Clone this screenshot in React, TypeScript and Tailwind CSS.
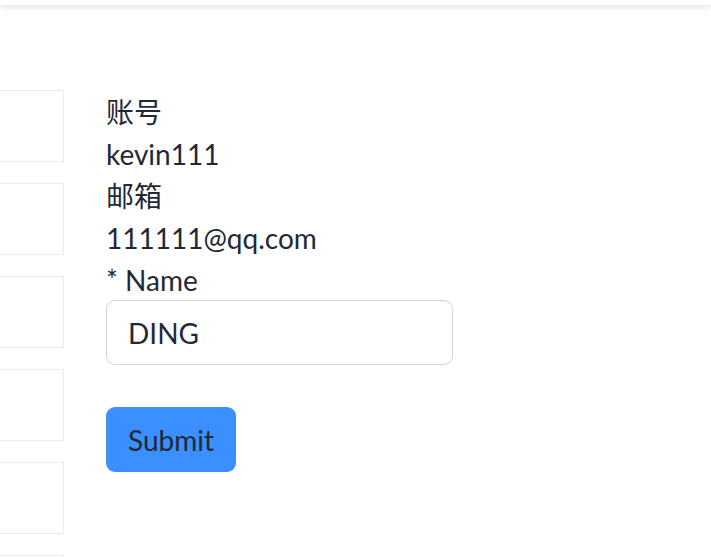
import React from "react";

export default function App() {
  const boxes = [0, 1, 2, 3, 4, 5];
  return (
    <div
      className="h-[557px] bg-white overflow-hidden text-[#1f2937]"
      style={{ fontFamily: 'Lato, "Noto Sans CJK SC", sans-serif' }}
    >
      <div className="h-[6px] bg-white shadow-[0_1px_6px_rgba(0,0,0,0.12)] border-b border-[#ececec]" />
      <div className="flex pt-[84px]">
        <div className="ml-[-136px] w-[200px] shrink-0 flex flex-col gap-[21px]">
          {boxes.map((b) => (
            <div key={b} className="h-[72px] shrink-0 border border-[#ebebeb] bg-white" />
          ))}
        </div>
        <div className="ml-[42px] pt-[1px] flex flex-col">
          <div className="text-[28px] leading-[42px]">账号</div>
          <div className="text-[28px] leading-[42px]">kevin111</div>
          <div className="text-[28px] leading-[42px]">邮箱</div>
          <div className="text-[28px] leading-[42px]">111111@qq.com</div>
          <div className="text-[28px] leading-[42px]">* Name</div>
          <input
            defaultValue="DING"
            className="mt-[-1px] w-[347px] h-[65px] border border-[#d4d4d8] rounded-[9px] px-[21px] text-[28px] text-[#1f2937] outline-none"
            style={{ fontFamily: 'Lato, "Noto Sans CJK SC", sans-serif' }}
          />
          <div className="mt-[42px]">
            <button className="h-[65px] px-[22px] rounded-[9px] bg-[#3b8ffe] text-[28px] text-[#1f2937]">
              Submit
            </button>
          </div>
        </div>
      </div>
    </div>
  );
}
